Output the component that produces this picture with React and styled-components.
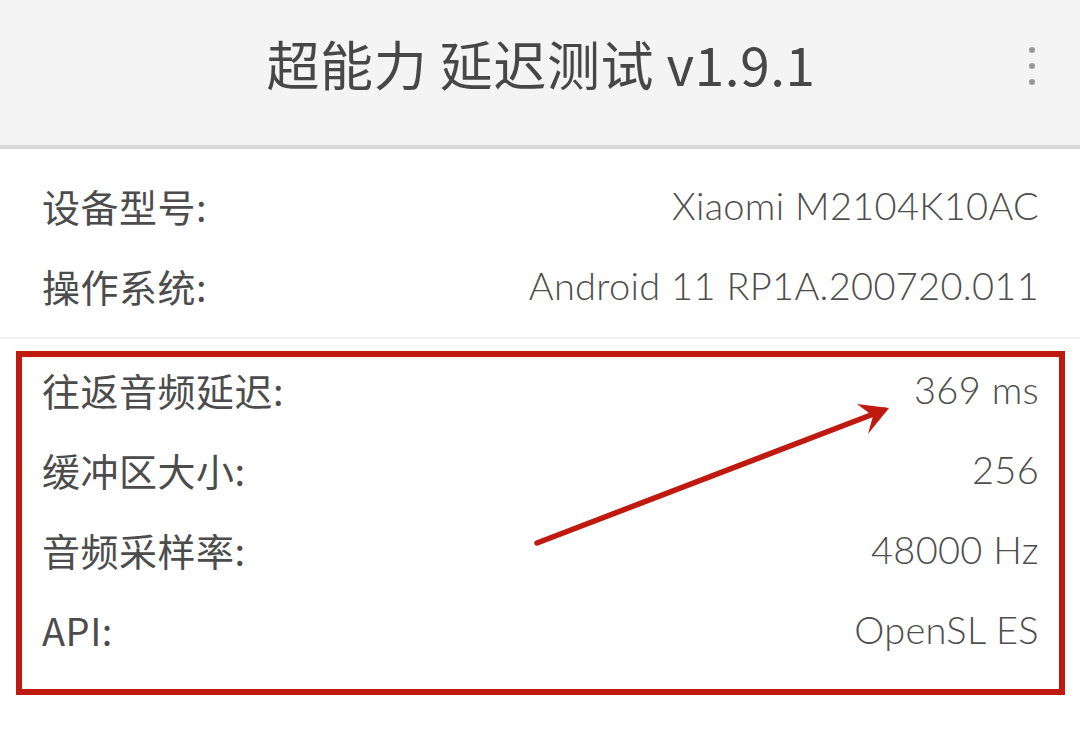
import React from 'react';
import styled, { createGlobalStyle } from 'styled-components';

const GlobalStyle = createGlobalStyle`
  html, body {
    margin: 0;
    padding: 0;
    background: #ffffff;
  }
  body {
    font-family: "Noto Sans CJK SC", "Noto Sans", sans-serif;
  }
`;

const Page = styled.div`
  width: 1080px;
  height: 733px;
  overflow: hidden;
  background: #ffffff;
`;

const Header = styled.header`
  height: 145px;
  background: #f4f4f4;
  border-bottom: 4px solid #d8d8d8;
  display: flex;
  align-items: center;
  justify-content: center;
  position: relative;
`;

const Title = styled.h1`
  margin: 0 0 19px;
  font-size: 53px;
  font-weight: 400;
  color: #474747;
  letter-spacing: 0.6px;
  padding-left: 2px;
`;

const MoreButton = styled.div`
  position: absolute;
  right: 45px;
  top: 47px;
  display: flex;
  flex-direction: column;
  gap: 10px;
  > span {
    width: 6px;
    height: 6px;
    border-radius: 50%;
    background: #9a9a9a;
  }
`;

const Section = styled.section`
  padding: ${p => p.$pad || '0'};
  position: relative;
`;

const Divider = styled.div`
  height: 2px;
  background: #efefef;
`;

const Row = styled.div`
  height: 80px;
  display: flex;
  align-items: center;
  justify-content: space-between;
  padding: 0 41px 0 42px;
`;

const Label = styled.span`
  font-family: "Noto Sans CJK SC", sans-serif;
  font-size: 38px;
  font-weight: 400;
  color: #4c4c4c;
  letter-spacing: 0.5px;
`;

const Value = styled.span`
  font-family: "Lato", "Noto Sans", sans-serif;
  font-weight: 300;
  font-size: 38px;
  color: #4e4e4e;
  letter-spacing: 0.3px;
`;

const Highlight = styled.div`
  position: absolute;
  left: 16px;
  top: 12px;
  width: 1049px;
  height: 344px;
  box-sizing: border-box;
  border: 6px solid #c0190f;
  pointer-events: none;
`;

const Arrow = styled.svg`
  position: absolute;
  left: 0;
  top: 0;
  pointer-events: none;
`;

const deviceRows = [
  ['设备型号:', 'Xiaomi M2104K10AC'],
  ['操作系统:', 'Android 11 RP1A.200720.011'],
];

const audioRows = [
  ['往返音频延迟:', '369 ms'],
  ['缓冲区大小:', '256'],
  ['音频采样率:', '48000 Hz'],
  ['API:', 'OpenSL ES'],
];

export default function App() {
  return (
    <Page>
      <GlobalStyle />
      <Header>
        <Title>超能力 延迟测试 v1.9.1</Title>
        <MoreButton>
          <span />
          <span />
          <span />
        </MoreButton>
      </Header>
      <Section $pad="16px 0 12px">
        {deviceRows.map(([k, v]) => (
          <Row key={k}>
            <Label>{k}</Label>
            <Value>{v}</Value>
          </Row>
        ))}
      </Section>
      <Divider />
      <Section $pad="10px 0 0">
        {audioRows.map(([k, v]) => (
          <Row key={k}>
            <Label>{k}</Label>
            <Value>{v}</Value>
          </Row>
        ))}
        <Highlight />
        <Arrow width="1080" height="360" viewBox="0 339 1080 360">
          <path
            d="M537 543 L884 410"
            stroke="#c0190f"
            strokeWidth="5.5"
            strokeLinecap="round"
            fill="none"
          />
          <path d="M889 408 L857 404 L873 416 L868 434 Z" fill="#c0190f" />
        </Arrow>
      </Section>
    </Page>
  );
}
